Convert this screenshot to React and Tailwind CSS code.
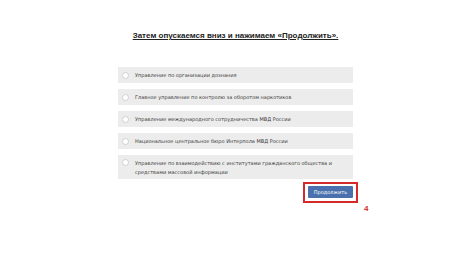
import React from 'react';

const options = [
  'Управление по организации дознания',
  'Главное управление по контролю за оборотом наркотиков',
  'Управление международного сотрудничества МВД России',
  'Национальное центральное бюро Интерпола МВД России',
  'Управление по взаимодействию с институтами гражданского общества и средствами массовой информации',
];

function Option({ label, tall }) {
  return (
    <label
      className={`flex ${tall ? 'h-[24px] items-start pt-[4px]' : 'h-[16px] items-center'} bg-[#ececec] pl-[4px] pr-[20px] cursor-pointer`}
    >
      <span className="w-[7px] h-[7px] shrink-0 rounded-full border border-[#d0d0d0] bg-white" />
      <span className="ml-[6px] font-['DejaVu_Sans',Verdana,sans-serif] text-[5px] leading-[9px] text-[#3a3a3a]">
        {label}
      </span>
    </label>
  );
}

export default function App() {
  return (
    <div className="w-[474px] h-[265px] bg-white font-['Liberation_Sans',Arial,sans-serif] pt-[31px]">
      <div className="w-[235px] ml-[118px]">
        <h1 className="text-center text-[8px] font-bold leading-[10px] text-[#222] underline underline-offset-[1px]">
          Затем опускаемся вниз и нажимаем «Продолжить».
        </h1>

        <div className="mt-[26px] flex flex-col gap-[6px]">
          {options.map((o, i) => (
            <Option key={o} label={o} tall={i === 4} />
          ))}
        </div>

        <div className="mt-[7px] flex justify-end">
          <div className="relative">
            <div className="w-[45px] h-[12px] bg-[#4a71ad] rounded-[1px] flex items-center justify-center">
              <span className="font-['DejaVu_Sans',Verdana,sans-serif] text-[5px] text-white leading-none">
                Продолжить
              </span>
            </div>
            <div className="absolute -left-[5px] -top-[4px] w-[55px] h-[21px] border-2 border-[#d42a2a]" />
            <span className="absolute left-[56px] top-[17px] text-[8px] font-bold text-[#d42a2a]">4</span>
          </div>
        </div>
      </div>
    </div>
  );
}
